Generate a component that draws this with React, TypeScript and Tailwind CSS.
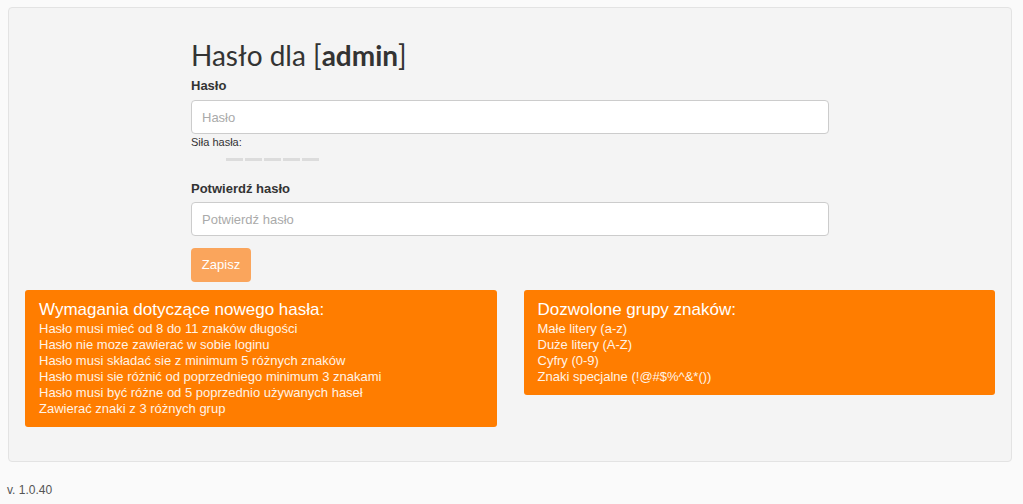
import React from "react";

const requirements = [
  "Hasło musi mieć od 8 do 11 znaków długości",
  "Hasło nie moze zawierać w sobie loginu",
  "Hasło musi składać sie z minimum 5 różnych znaków",
  "Hasło musi sie różnić od poprzedniego minimum 3 znakami",
  "Hasło musi być różne od 5 poprzednio używanych haseł",
  "Zawierać znaki z 3 różnych grup",
];

const groups = ["Małe litery (a-z)", "Duże litery (A-Z)", "Cyfry (0-9)", "Znaki specjalne (!@#$%^&*())"];

const InfoBox = ({ title, items }: { title: string; items: string[] }) => (
  <div className="bg-[#ff7d00] rounded-[3px] text-white px-[14px] pt-[9px] pb-[10px]">
    <div className="text-[17px] leading-[22px]">{title}</div>
    {items.map((item) => (
      <div key={item} className="text-[13px] leading-[16px] text-[#fff3e6]">
        {item}
      </div>
    ))}
  </div>
);

export default function App() {
  return (
    <div className="min-h-[504px] bg-[#fafafa] pt-[7px] font-['Liberation_Sans',Arial,sans-serif] text-[#333]">
      <div className="ml-[8px] w-[1004px] h-[455px] bg-[#f4f4f4] border border-[#e3e3e3] rounded-[4px]">
        {/* Form */}
        <div className="ml-[182px] w-[638px] pt-[30px]">
          <h1 className="font-['Lato',sans-serif] text-[28px] leading-[34px] text-[#333]">
            Hasło dla [<b className="font-bold">admin</b>]
          </h1>
          <label className="block mt-[5px] text-[13px] font-bold leading-[18px]">Hasło</label>
          <input
            type="password"
            placeholder="Hasło"
            className="mt-[5px] block w-full h-[34px] bg-white border border-[#ccc] rounded-[4px] px-[10px] text-[13px] placeholder:text-[#aaa] outline-none"
          />
          <div className="mt-[1px] text-[11px] leading-[14px]">Siła hasła:</div>
          <div className="flex gap-[2px] ml-[35px] mt-[9px]">
            {[0, 1, 2, 3, 4].map((i) => (
              <div key={i} className="w-[17px] h-[3px] bg-[#dcdcdc]" />
            ))}
          </div>
          <label className="block mt-[19px] text-[13px] font-bold leading-[18px]">Potwierdź hasło</label>
          <input
            type="password"
            placeholder="Potwierdź hasło"
            className="mt-[4px] block w-full h-[34px] bg-white border border-[#ccc] rounded-[4px] px-[10px] text-[13px] placeholder:text-[#aaa] outline-none"
          />
          <button className="mt-[12px] h-[34px] w-[60px] rounded-[4px] bg-[#faa55c] text-white text-[13px]">
            Zapisz
          </button>
        </div>
        {/* Info boxes */}
        <div className="flex gap-[27px] items-start px-[16px] mt-[8px]">
          <div className="flex-1">
            <InfoBox title="Wymagania dotyczące nowego hasła:" items={requirements} />
          </div>
          <div className="flex-1">
            <InfoBox title="Dozwolone grupy znaków:" items={groups} />
          </div>
        </div>
      </div>
      <div className="pl-[7px] pt-[19px] text-[12px] text-[#555]">v. 1.0.40</div>
    </div>
  );
}
